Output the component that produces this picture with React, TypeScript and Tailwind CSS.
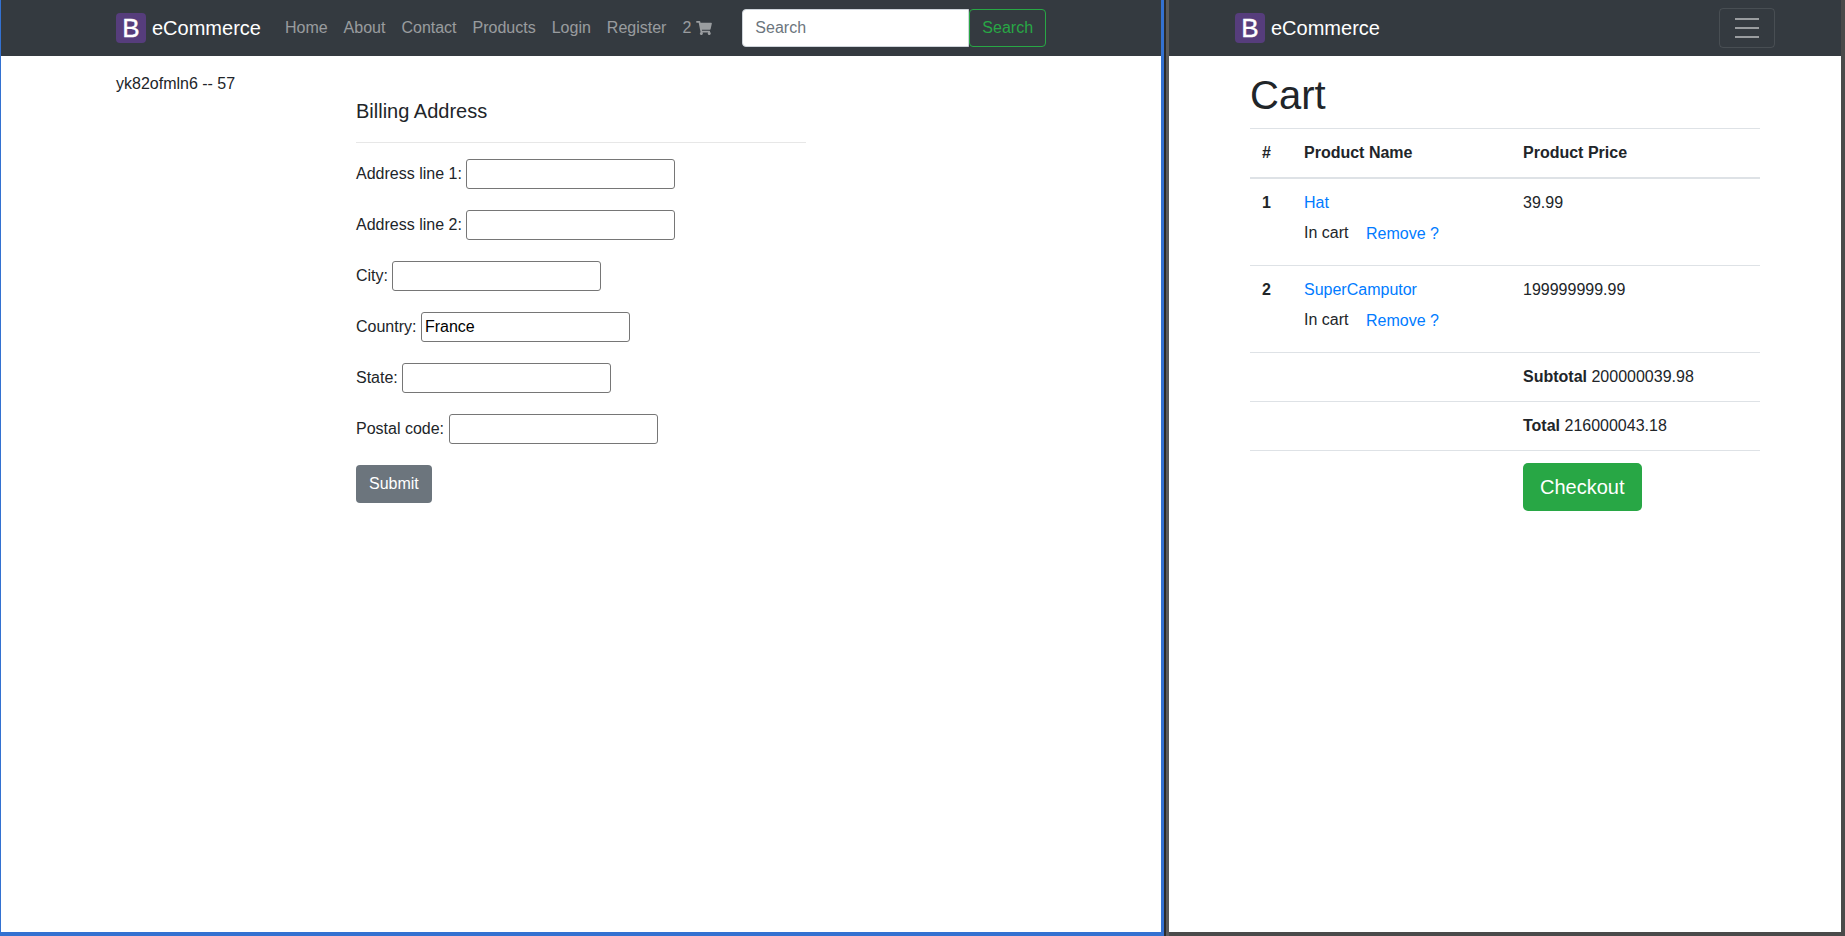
import { FaShoppingCart } from 'react-icons/fa';

function Brand() {
  return (
    <a href="#" className="flex items-center gap-[6px] text-[20px] leading-[30px] text-white">
      <span className="flex h-[30px] w-[30px] items-center justify-center rounded-[4px] bg-[#563d7c] text-[26px] leading-none [-webkit-text-stroke:0.4px_white]">B</span>
      eCommerce
    </a>
  );
}

const navLinks = ['Home', 'About', 'Contact', 'Products', 'Login', 'Register'];

function BillingWindow() {
  const fields = [
    { label: 'Address line 1:', value: '' },
    { label: 'Address line 2:', value: '' },
    { label: 'City:', value: '' },
    { label: 'Country:', value: 'France' },
    { label: 'State:', value: '' },
    { label: 'Postal code:', value: '' },
  ];

  return (
    <div className="w-[1161px] shrink-0 bg-white border-l border-b-4 border-[#3371d1]">
      {/* Navbar */}
      <nav className="h-14 bg-[#343a40]">
        <div className="mx-auto flex h-14 w-[930px] items-center">
          <Brand />
          <ul className="ml-4 flex items-center text-[rgba(255,255,255,0.5)]">
            {navLinks.map((link) => (
              <li key={link} className="px-2">{link}</li>
            ))}
            <li className="flex items-center gap-[5px] px-2">
              2 <FaShoppingCart className="h-[14px] w-4" />
            </li>
          </ul>
          <form className="ml-[22px] flex">
            <input
              type="text"
              placeholder="Search"
              className="h-[38px] w-[227px] rounded-l-[4px] border border-[#ced4da] bg-white px-3 text-[#495057] placeholder:text-[#6c757d]"
            />
            <button type="button" className="h-[38px] rounded-[4px] border border-[#28a745] px-3 text-[#28a745]">
              Search
            </button>
          </form>
        </div>
      </nav>

      {/* Page */}
      <div className="mx-auto flex w-[930px] text-[#212529]">
        <div className="w-[240px] pt-[16px]">yk82ofmln6 -- 57</div>
        <div className="w-[450px] pt-[43px]">
          <h5 className="text-[20px] leading-6">Billing Address</h5>
          <hr className="mt-[19px] mb-4 border-[#e7e7e7]" />
          {fields.map((field) => (
            <div key={field.label} className="mb-[21px] flex items-center gap-[4.45px]">
              <label>{field.label}</label>
              <input
                type="text"
                defaultValue={field.value}
                className="h-[30px] w-[209px] rounded-[3px] border border-[#767676] px-[3px] text-black"
              />
            </div>
          ))}
          <button type="button" className="h-[38px] rounded-[4px] bg-[#6c757d] px-[13px] text-white">Submit</button>
        </div>
      </div>
    </div>
  );
}

function CartRow({ num, name, price }: { num: number; name: string; price: string }) {
  return (
    <tr className="border-t border-[#dee2e6] align-top">
      <td className="p-3 font-bold">{num}</td>
      <td className="px-3 pt-3 pb-[19px]">
        <a href="#" className="text-[#007bff]">{name}</a>
        <div className="mt-[6px] flex gap-[17.5px]">
          <span>In cart</span>
          <a href="#" className="mt-px text-[#007bff]">Remove ?</a>
        </div>
      </td>
      <td className="p-3">{price}</td>
    </tr>
  );
}

function CartWindow() {
  return (
    <div className="w-[672px] shrink-0 bg-white border-b-4 border-[#4a4a4a]">
      {/* Navbar */}
      <nav className="h-14 bg-[#343a40]">
        <div className="mx-auto flex h-14 w-[540px] items-center justify-between">
          <Brand />
          <button type="button" className="flex h-10 w-14 flex-col items-center justify-center gap-[7px] rounded-[4px] border border-[rgba(255,255,255,0.1)]">
            <span className="h-[2px] w-6 bg-[rgba(255,255,255,0.5)]" />
            <span className="h-[2px] w-6 bg-[rgba(255,255,255,0.5)]" />
            <span className="h-[2px] w-6 bg-[rgba(255,255,255,0.5)]" />
          </button>
        </div>
      </nav>

      {/* Cart */}
      <div className="mx-auto w-[510px] text-[#212529]">
        <h1 className="mt-[15px] mb-[9px] text-[40px] leading-[48px]">Cart</h1>
        <table className="w-full table-fixed border-collapse">
          <colgroup>
            <col className="w-[42px]" />
            <col className="w-[219px]" />
            <col className="w-[249px]" />
          </colgroup>
          <thead>
            <tr className="border-t border-b-2 border-[#dee2e6] text-left align-top">
              <th className="p-3">#</th>
              <th className="p-3">Product Name</th>
              <th className="p-3">Product Price</th>
            </tr>
          </thead>
          <tbody>
            <CartRow num={1} name="Hat" price="39.99" />
            <CartRow num={2} name="SuperCamputor" price="199999999.99" />
            <tr className="border-t border-[#dee2e6]">
              <td />
              <td />
              <td className="p-3"><strong>Subtotal</strong> 200000039.98</td>
            </tr>
            <tr className="border-t border-[#dee2e6]">
              <td />
              <td />
              <td className="p-3"><strong>Total</strong> 216000043.18</td>
            </tr>
            <tr className="border-t border-[#dee2e6]">
              <td />
              <td />
              <td className="p-3">
                <button type="button" className="h-12 rounded-[5px] bg-[#28a745] px-[17px] text-[20px] text-white">Checkout</button>
              </td>
            </tr>
          </tbody>
        </table>
      </div>
    </div>
  );
}

export default function App() {
  return (
    <div className="flex h-[936px] w-[1845px] overflow-hidden bg-[#4a4a4a] font-['Liberation_Sans',Arial,sans-serif] text-base leading-6">
      <BillingWindow />
      <div className="flex w-[8px] shrink-0">
        <div className="w-[3px] bg-[#3371d1]" />
        <div className="w-[2px] bg-[#2b2b2b]" />
        <div className="w-[3px] bg-[#5a5a5a]" />
      </div>
      <CartWindow />
    </div>
  );
}
